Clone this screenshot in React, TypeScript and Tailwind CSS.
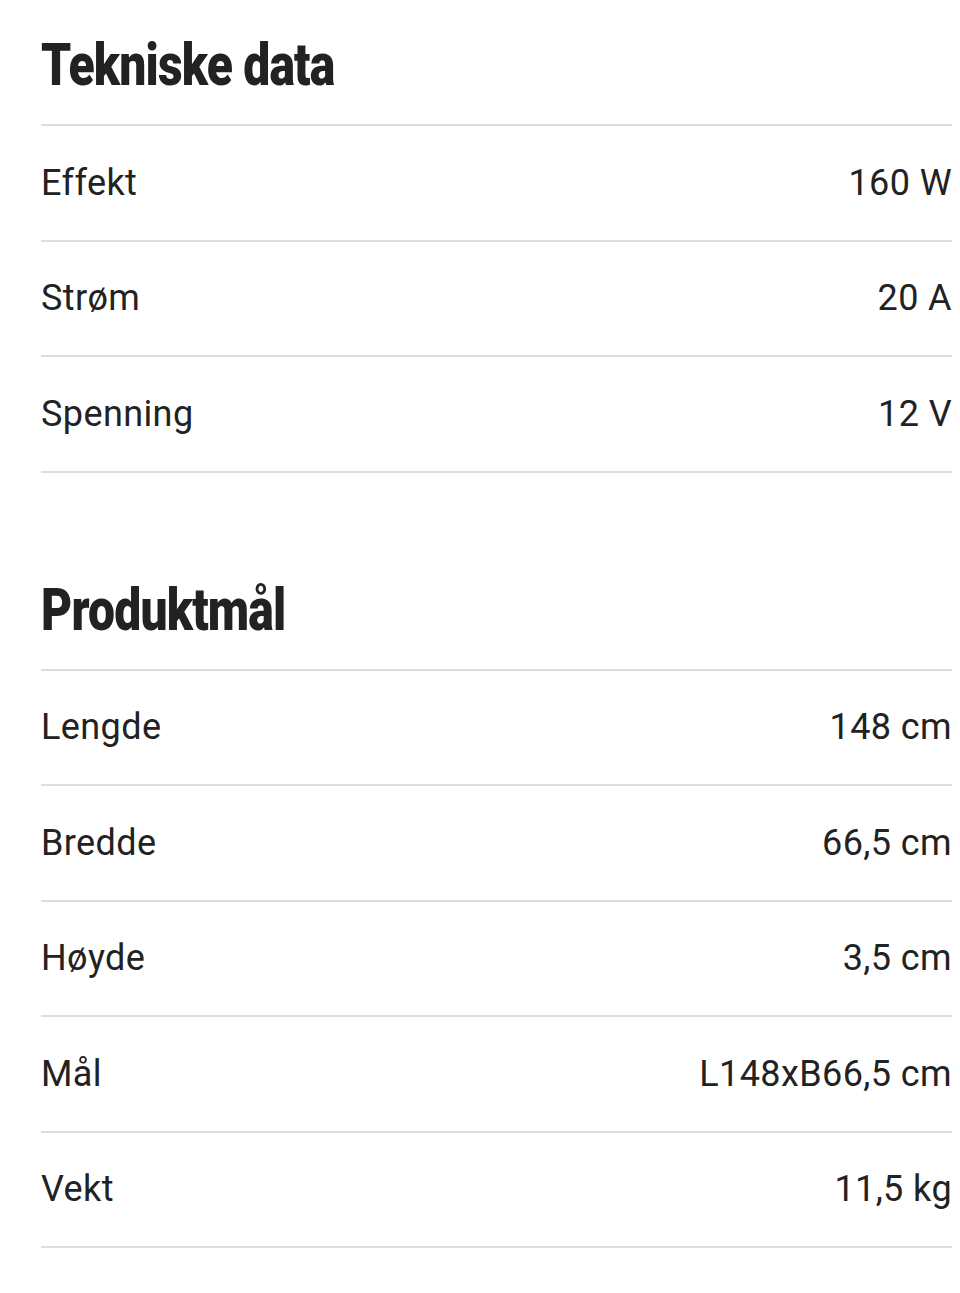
import React from "react";

const sections = [
  {
    title: "Tekniske data",
    rows: [
      ["Effekt", "160 W"],
      ["Strøm", "20 A"],
      ["Spenning", "12 V"],
    ],
  },
  {
    title: "Produktmål",
    rows: [
      ["Lengde", "148 cm"],
      ["Bredde", "66,5 cm"],
      ["Høyde", "3,5 cm"],
      ["Mål", "L148xB66,5 cm"],
      ["Vekt", "11,5 kg"],
    ],
  },
];

export default function App() {
  return (
    <div className="w-[960px] h-[1293px] bg-white pl-[41px] pr-[8px] text-[#222222]" style={{ fontFamily: "Roboto, 'Noto Sans', sans-serif" }}>
      {sections.map((s, i) => (
        <div key={s.title} className={i === 0 ? "pt-[30px]" : "pt-[102px]"}>
          <h2 className="h-[94px] text-[60px] font-black leading-[70px] tracking-[-1px] text-[#222222]">
            <span className="inline-block origin-left scale-x-[0.8]">{s.title}</span>
          </h2>
          <div className="border-t-2 border-[#dddddd]">
            {s.rows.map(([k, v]) => (
              <div key={k} className="flex h-[115.5px] items-center justify-between border-b-2 border-[#dddddd] text-[36px] tracking-[0.4px]">
                <span>{k}</span>
                <span>{v}</span>
              </div>
            ))}
          </div>
        </div>
      ))}
    </div>
  );
}
